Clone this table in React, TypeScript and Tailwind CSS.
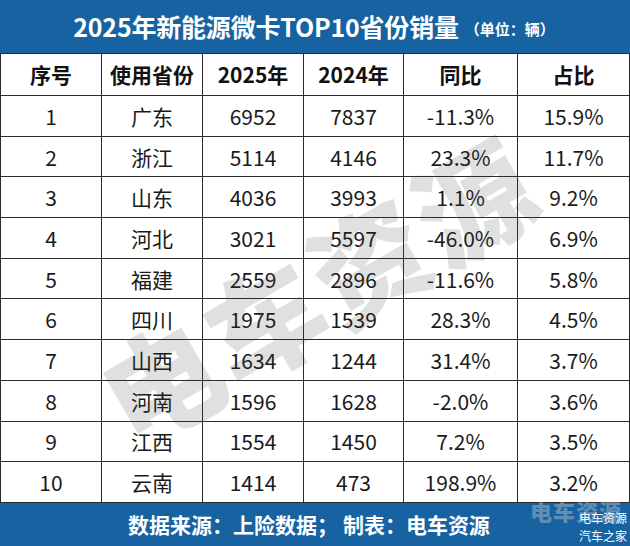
import React from "react";

const rows: [string, string, string, string, string, string][] = [
  ["1", "广东", "6952", "7837", "-11.3%", "15.9%"],
  ["2", "浙江", "5114", "4146", "23.3%", "11.7%"],
  ["3", "山东", "4036", "3993", "1.1%", "9.2%"],
  ["4", "河北", "3021", "5597", "-46.0%", "6.9%"],
  ["5", "福建", "2559", "2896", "-11.6%", "5.8%"],
  ["6", "四川", "1975", "1539", "28.3%", "4.5%"],
  ["7", "山西", "1634", "1244", "31.4%", "3.7%"],
  ["8", "河南", "1596", "1628", "-2.0%", "3.6%"],
  ["9", "江西", "1554", "1450", "7.2%", "3.5%"],
  ["10", "云南", "1414", "473", "198.9%", "3.2%"],
];

const heads = ["序号", "使用省份", "2025年", "2024年", "同比", "占比"];

export default function App() {
  return (
    <div
      className="relative w-[630px] h-[546px] overflow-hidden bg-white"
      style={{ fontFamily: '"Noto Sans CJK SC", "Noto Sans", sans-serif' }}
    >
      <div className="h-[53px] bg-[#1763a2] flex items-center justify-center pr-[2px]">
        <span className="text-white font-bold text-[25px] leading-none tracking-[-0.2px]">
          2025年新能源微卡TOP10省份销量
        </span>
        <span className="text-white font-bold text-[15px] leading-none ml-[6px] mt-[3px] whitespace-nowrap">
          （单位：辆）
        </span>
      </div>
      <table className="table-fixed border-collapse w-[629px] text-[#1a1a1a]">
        <colgroup>
          <col className="w-[101px]" />
          <col className="w-[101px]" />
          <col className="w-[101px]" />
          <col className="w-[100px]" />
          <col className="w-[114px]" />
          <col className="w-[112px]" />
        </colgroup>
        <thead>
          <tr className="h-[42px]">
            {heads.map((h) => (
              <th
                key={h}
                className="border border-[#2a2a2a] text-center font-bold text-[21px] leading-none text-[#111] p-0"
              >
                {h}
              </th>
            ))}
          </tr>
        </thead>
        <tbody>
          {rows.map((r) => (
            <tr key={r[0]} className="h-[40.7px]">
              {r.map((c, i) => (
                <td
                  key={i}
                  className="border border-[#2a2a2a] text-center text-[21px] leading-none p-0 pt-[1px]"
                >
                  {c}
                </td>
              ))}
            </tr>
          ))}
        </tbody>
      </table>
      <div className="relative h-[44px] bg-[#1763a2] flex items-center justify-center pr-[12px]">
        <span className="text-white font-bold text-[21px] leading-none">
          数据来源：上险数据；&nbsp;制表：电车资源
        </span>
        <span className="absolute left-[530px] top-[-4px] whitespace-nowrap text-[rgba(215,215,215,0.4)] font-black text-[22px] tracking-[1px] leading-none">
          电车资源
        </span>
        <div className="absolute right-[3px] top-[6px] flex flex-col items-end text-white text-[12px] leading-[18px] whitespace-nowrap">
          <span>电车资源</span>
          <span>汽车之家</span>
        </div>
      </div>
      <div className="pointer-events-none absolute left-[316px] top-[286px] w-0 h-0">
        <div className="absolute left-0 top-0 whitespace-nowrap text-[rgba(60,60,60,0.16)] font-black text-[116px] leading-none tracking-[4px] [transform:translate(-50%,-50%)_rotate(-30deg)]">
          电车资源
        </div>
      </div>
    </div>
  );
}
